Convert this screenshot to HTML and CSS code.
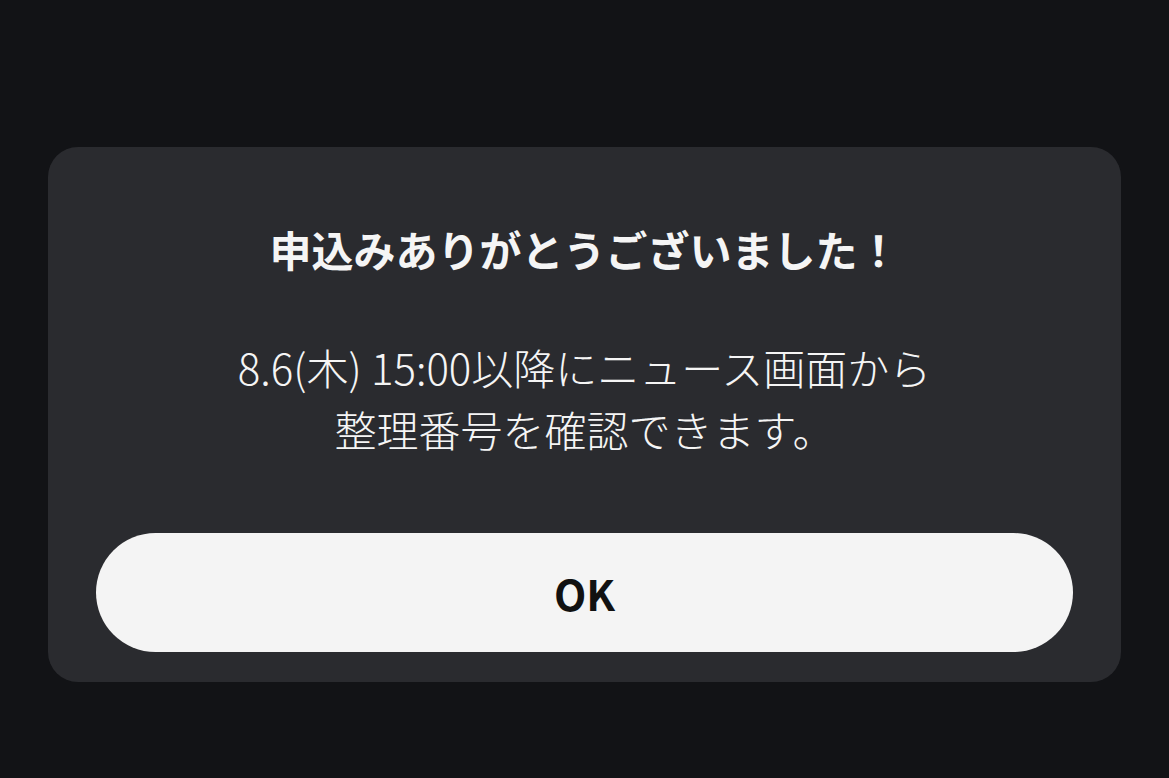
FILE: index.html
```html
<!DOCTYPE html>
<html lang="ja">
<head>
  <meta charset="UTF-8" />
  <meta name="viewport" content="width=device-width, initial-scale=1" />
  <title>申込み完了</title>
  <link rel="stylesheet" href="styles.css">
</head>
<body>

  <!-- Completion dialog -->
  <div class="dialog-card">
    <div class="dialog-title">申込みありがとうございました！</div>
    <div class="dialog-text">
      8.6(木) 15:00以降にニュース画面から<br>
      整理番号を確認できます。
    </div>
    <button class="ok-button">OK</button>
  </div>

</body>
</html>
```

FILE: styles.css
```css
:root {
  --bg: #121316;
  --card-bg: #2a2b2f;
  --text: #f5f5f5;
  --button-bg: #f4f4f4;
  --button-text: #111111;
}

body {
  margin: 0;
  background: var(--bg);
  font-family: "Noto Sans CJK JP", "Noto Sans", sans-serif;
  padding: 147px 48px 0;
  min-height: 100vh;
  box-sizing: border-box;
}

.dialog-card {
  background: var(--card-bg);
  border-radius: 30px;
  padding: 72px 48px 30px;
  display: flex;
  flex-direction: column;
  align-items: stretch;
  text-align: center;
  color: var(--text);
}

.dialog-title {
  font-size: 42px;
  font-weight: 700;
  line-height: 60px;
}

.dialog-text {
  margin-top: 57px;
  font-size: 42px;
  font-weight: 300;
  line-height: 62px;
}

.ok-button {
  margin-top: 73px;
  height: 119px;
  border: none;
  border-radius: 60px;
  background: var(--button-bg);
  color: var(--button-text);
  font-family: inherit;
  font-size: 42px;
  font-weight: 700;
  cursor: pointer;
}
```
